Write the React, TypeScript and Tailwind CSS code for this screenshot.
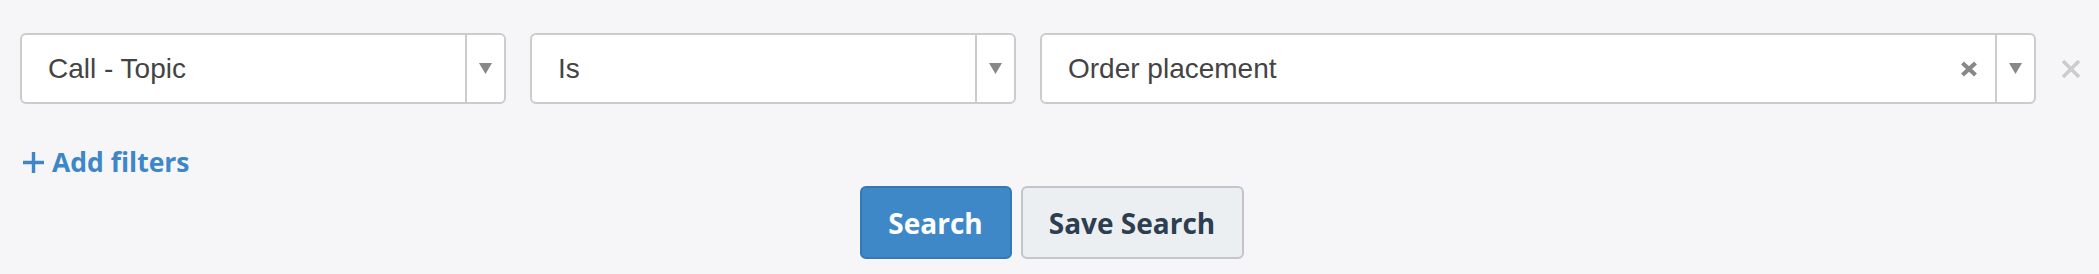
import React from 'react';

const Caret = () => (
  <svg width="13" height="11" viewBox="0 0 13 11" className="block">
    <path d="M0 0 H13 L6.5 11 Z" fill="#888888" />
  </svg>
);

const ClearIcon = () => (
  <svg width="18" height="16" viewBox="0 0 18 16" className="block">
    <path d="M2.5 2 L15.5 14 M15.5 2 L2.5 14" stroke="#888888" strokeWidth="4.2" strokeLinecap="butt" />
  </svg>
);

const RemoveIcon = () => (
  <svg width="20" height="20" viewBox="0 0 20 20" className="block">
    <path d="M2 2 L18 18 M18 2 L2 18" stroke="#cccccc" strokeWidth="3.6" />
  </svg>
);

const PlusIcon = () => (
  <svg width="21" height="21" viewBox="0 0 21 21" className="block">
    <path d="M10.5 0 V21 M0 10.5 H21" stroke="#3d87c9" strokeWidth="3.4" />
  </svg>
);

function SelectBox({ value, span, clearable }: { value: string; span?: boolean; clearable?: boolean }) {
  return (
    <div
      className={`${span ? 'col-span-2' : ''} h-[71px] flex items-stretch bg-white border-2 border-[#cccccc] rounded-[6px]`}
    >
      <div className="flex-1 flex items-center pl-[26px] text-[28px] text-[#444444] font-['Liberation_Sans',Arial,sans-serif]">
        {value}
      </div>
      {clearable && (
        <div className="flex items-center pr-[17px]">
          <ClearIcon />
        </div>
      )}
      <div className="w-[39px] border-l-2 border-[#cccccc] flex items-center justify-center">
        <Caret />
      </div>
    </div>
  );
}

export default function App() {
  return (
    <div className="w-[2099px] h-[274px] bg-[#f6f6f8] pl-[20px] pt-[33px] font-['Open_Sans',sans-serif]">
      <div className="flex items-center">
        <div className="w-[2016px] grid grid-cols-4 gap-x-[24px]">
          <SelectBox value="Call - Topic" />
          <SelectBox value="Is" />
          <SelectBox value="Order placement" span clearable />
        </div>
        <div className="pl-[25px]">
          <RemoveIcon />
        </div>
      </div>

      <div className="mt-[41px] flex items-center text-[#3d87c9] font-bold text-[26.5px] leading-[34px]">
        <span className="ml-[3px] mr-[8px] mt-[1px]">
          <PlusIcon />
        </span>
        <span>Add filters</span>
      </div>

      <div className="flex justify-center gap-[9px] mt-[7px] pr-[20px] pl-[4px]">
        <button className="w-[152px] h-[73px] bg-[#3f88c8] border-2 border-[#3479b5] rounded-[6px] text-white font-bold text-[28px]">
          Search
        </button>
        <button className="w-[223px] h-[73px] bg-[#eceff1] border-2 border-[#c2c6ca] rounded-[6px] text-[#2c3e50] font-bold text-[28px]">
          Save Search
        </button>
      </div>
    </div>
  );
}
